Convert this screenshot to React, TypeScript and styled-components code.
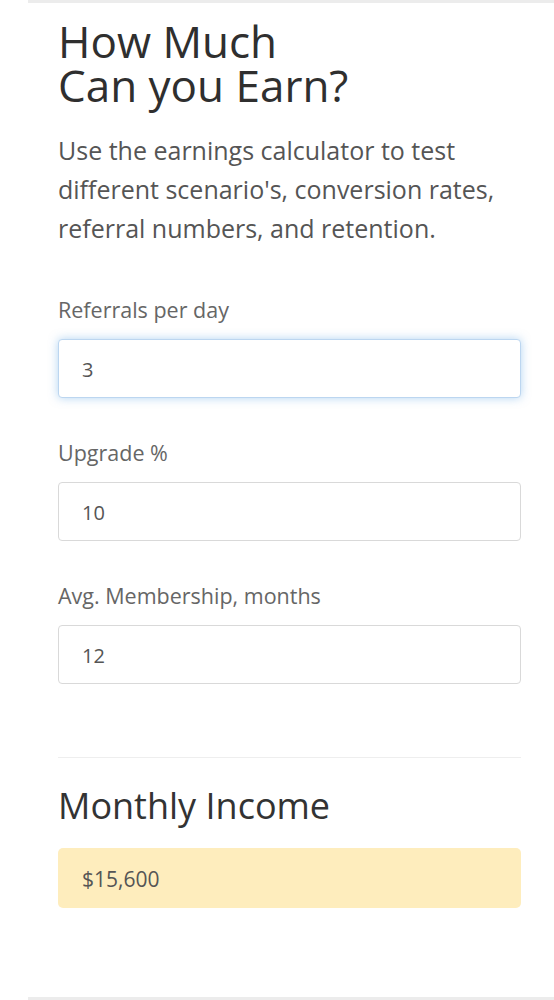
import React from "react";
import styled, { createGlobalStyle } from "styled-components";

const GlobalStyle = createGlobalStyle`
  html, body {
    margin: 0;
    padding: 0;
    background: #ffffff;
  }
  body {
    font-family: "Open Sans", "Noto Sans", sans-serif;
  }
  * {
    box-sizing: border-box;
  }
`;

interface Field {
  label: string;
  value: string;
  focused?: boolean;
}

const fields: Field[] = [
  { label: "Referrals per day", value: "3", focused: true },
  { label: "Upgrade %", value: "10" },
  { label: "Avg. Membership, months", value: "12" },
];

function App() {
  return (
    <>
      <GlobalStyle />
      <Card>
        <Title>
          How Much
          <br />
          Can you Earn?
        </Title>
        <Intro>
          Use the earnings calculator to test different scenario's, conversion rates,
          referral numbers, and retention.
        </Intro>
        <Form>
          {fields.map((f) => (
            <FieldGroup key={f.label}>
              <Label>{f.label}</Label>
              <TextInput type="text" defaultValue={f.value} $focused={f.focused} />
            </FieldGroup>
          ))}
        </Form>
        <Divider />
        <ResultTitle>Monthly Income</ResultTitle>
        <ResultBox>$15,600</ResultBox>
      </Card>
    </>
  );
}

const Card = styled.div`
  margin-left: 28px;
  min-height: 1000px;
  border-top: 3px solid #ececec;
  border-bottom: 3px solid #ececec;
  padding: 16px 33px 0 30px;
`;

const Title = styled.h1`
  margin: 0;
  font-size: 44px;
  line-height: 44px;
  font-weight: 400;
  color: #2f2f2f;
`;

const Intro = styled.p`
  margin: 24px 0 0;
  font-size: 25px;
  line-height: 39px;
  color: #555555;
`;

const Form = styled.div`
  margin-top: 48px;
  display: flex;
  flex-direction: column;
  gap: 41.5px;
`;

const FieldGroup = styled.div`
  display: flex;
  flex-direction: column;
  gap: 14px;
`;

const Label = styled.label`
  font-size: 21.5px;
  line-height: 28.5px;
  color: #666666;
`;

const TextInput = styled.input<{ $focused?: boolean }>`
  width: 100%;
  height: 59px;
  padding: 2px 23px 0;
  font-family: inherit;
  font-size: 20px;
  color: #555555;
  background: #ffffff;
  border: 1px solid ${({ $focused }) => ($focused ? "#bcd6f0" : "#d9d9d9")};
  border-radius: 4px;
  outline: none;
  box-shadow: ${({ $focused }) =>
    $focused ? "0 0 10px rgba(102, 170, 230, 0.5)" : "none"};
`;

const Divider = styled.hr`
  margin: 73px 0 0;
  border: 0;
  border-top: 1px solid #eeeeee;
`;

const ResultTitle = styled.h2`
  margin: 27px 0 0;
  font-size: 36px;
  line-height: 42px;
  font-weight: 400;
  color: #333333;
`;

const ResultBox = styled.div`
  margin-top: 21px;
  height: 60px;
  display: flex;
  align-items: center;
  padding: 2px 24px 0;
  font-size: 21px;
  color: #555555;
  background: #feedbd;
  border-radius: 5px;
`;

export default App;
